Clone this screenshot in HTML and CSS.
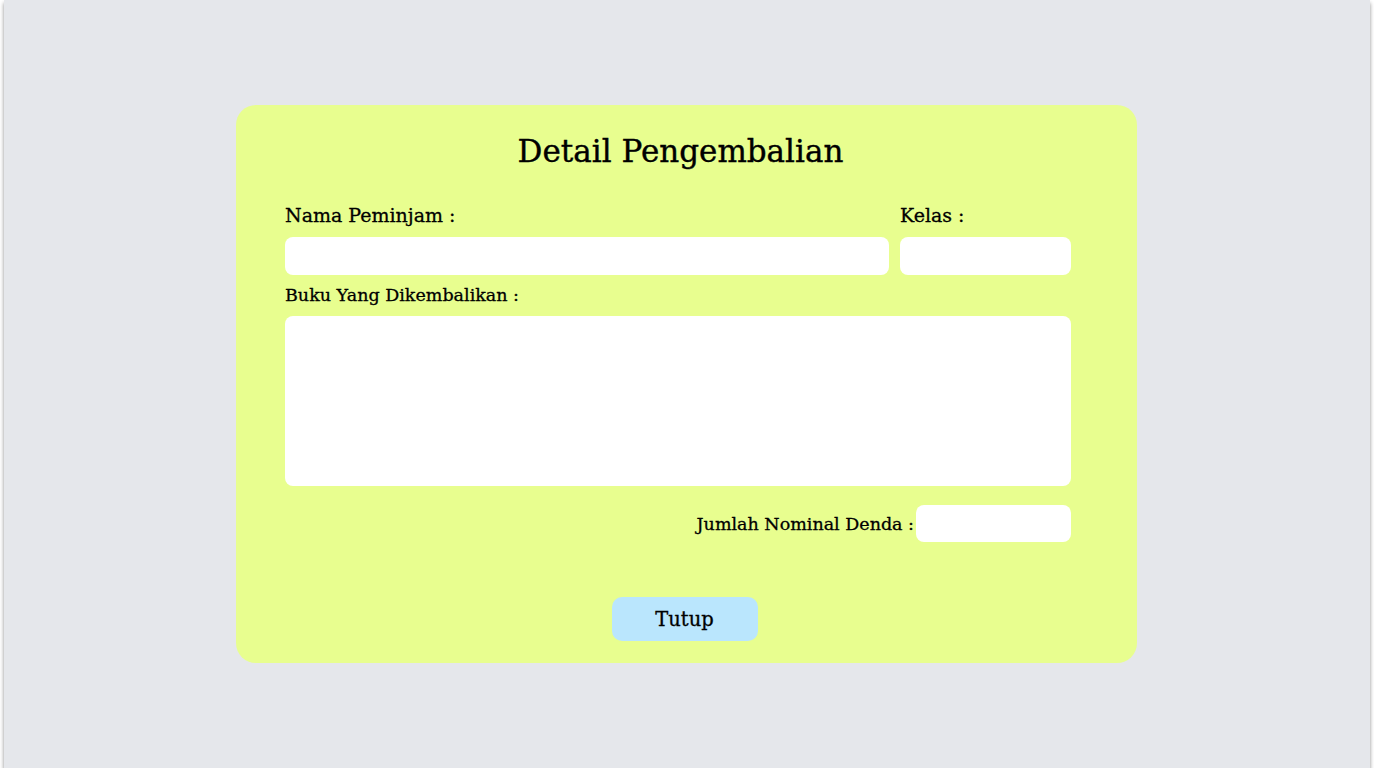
FILE: index.html
```html
<!DOCTYPE html>
<html>
<head>
<meta charset="utf-8">
<link rel="stylesheet" href="styles.css">
</head>
<body>
<div class="screen">
  <div class="card">
    <h1 class="title">Detail Pengembalian</h1>
    <div class="row">
      <div class="field grow">
        <label class="label">Nama Peminjam :</label>
        <div class="input"></div>
      </div>
      <div class="field kelas">
        <label class="label">Kelas :</label>
        <div class="input"></div>
      </div>
    </div>
    <div class="field">
      <label class="label small">Buku Yang Dikembalikan :</label>
      <div class="textarea"></div>
    </div>
    <div class="denda">
      <label class="label small">Jumlah Nominal Denda :</label>
      <div class="input denda-input"></div>
    </div>
    <div class="actions">
      <button class="btn">Tutup</button>
    </div>
  </div>
</div>
</body>
</html>
```
FILE: styles.css
```css
* { box-sizing: border-box; }
html, body { margin: 0; padding: 0; background: #ffffff; }
body { font-family: "DejaVu Serif", serif; color: #000; }
.screen {
  width: 1366px;
  height: 768px;
  margin-left: 4px;
  background: #e5e7eb;
  box-shadow: 0 3px 4px rgba(0,0,0,0.45);
  padding-top: 105px;
  display: flex;
  flex-direction: column;
  align-items: flex-start;
}
.card {
  margin-left: 232px;
  width: 901px;
  height: 558px;
  background: #e8fe8f;
  border-radius: 20px;
  padding: 26px 66px 0 49px;
  display: flex;
  flex-direction: column;
}
.title {
  margin: 0;
  font-weight: normal;
  font-size: 31px;
  line-height: 40px;
  text-align: center;
  padding-left: 5px;
  -webkit-text-stroke: 0.4px #000;
}
.row { display: flex; gap: 11px; margin-top: 32px; }
.field { display: flex; flex-direction: column; }
.grow { flex: 1; }
.kelas { width: 171px; }
.label { font-size: 19px; line-height: 24px; margin-bottom: 10px; -webkit-text-stroke: 0.3px #000; }
.label.small { font-size: 17.5px; line-height: 20px; margin-top: 10px; margin-bottom: 11px; }
.input { height: 38px; background: #fff; border-radius: 8px; }
.textarea { height: 170px; background: #fff; border-radius: 8px; }
.denda { display: flex; justify-content: flex-end; align-items: center; margin-top: 19px; gap: 2px; }
.denda .label.small { margin: 0; }
.denda-input { width: 155px; height: 37px; }
.actions { display: flex; justify-content: center; margin-top: 55px; padding-left: 13px; }
.btn {
  width: 146px;
  height: 44px;
  border: none;
  background: #bae6fd;
  border-radius: 10px;
  font-family: "DejaVu Serif", serif;
  font-size: 19.5px;
  color: #000;
  -webkit-text-stroke: 0.3px #000;
}
```
